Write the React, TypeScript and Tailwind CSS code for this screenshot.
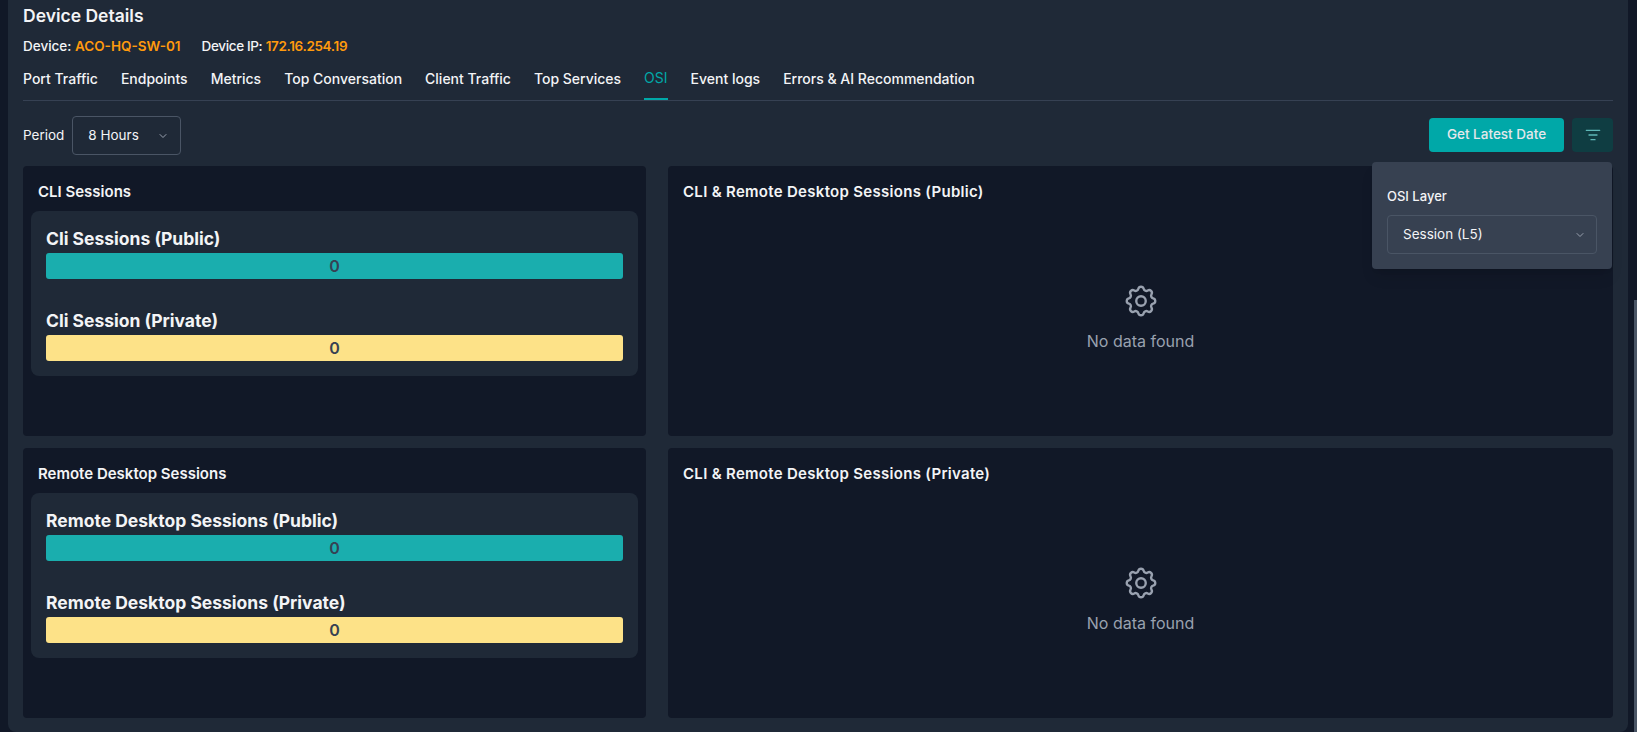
import { ChevronDown, ListFilter } from "lucide-react";
import { TbSettings } from "react-icons/tb";

const tabs = [
  "Port Traffic",
  "Endpoints",
  "Metrics",
  "Top Conversation",
  "Client Traffic",
  "Top Services",
  "OSI",
  "Event logs",
  "Errors & AI Recommendation",
];

const Bar = ({ label, color }: { label: string; color: string }) => (
  <div>
    <p className="text-[17.5px] leading-[28px] font-bold text-gray-100 mb-0">{label}</p>
    <div className={`h-[26px] rounded-[3px] flex items-center justify-center text-[16px] font-semibold text-gray-700 ${color}`}>0</div>
  </div>
);

const SessionCard = ({ title, rows }: { title: string; rows: string[] }) => (
  <section className="h-[270px] rounded bg-[#111827] pl-2 pr-2 pt-[16px]">
    <h3 className="pl-[7px] text-[15px] leading-[20px] font-semibold text-gray-100 mb-[9px]">{title}</h3>
    <div className="rounded-lg bg-[#1f2937] pl-[15px] pr-[15px] pt-[14px] pb-[15px] flex flex-col gap-[28px]">
      <Bar label={rows[0]} color="bg-[#1aaeae]" />
      <Bar label={rows[1]} color="bg-[#fde288]" />
    </div>
  </section>
);

const EmptyCard = ({ title }: { title: string }) => (
  <section className="h-[270px] rounded bg-[#111827] px-[15px] pt-[16px] flex flex-col">
    <h3 className="text-[15px] leading-[20px] tracking-[0.3px] font-semibold text-gray-100">{title}</h3>
    <div className="flex flex-col items-center mt-[80px]">
      <TbSettings size={38} strokeWidth={1.5} className="text-gray-400" />
      <p className="mt-[9px] text-base text-gray-400">No data found</p>
    </div>
  </section>
);

export default function App() {
  return (
    <div className="relative h-[732px] overflow-hidden bg-[#111827] font-['Inter','Liberation_Sans',sans-serif] pl-2 pr-[9px]">
      <main className="relative h-full rounded-b-lg bg-[#1f2937] px-[15px] text-gray-100">
        <h1 className="pt-[5px] text-[17.5px] leading-[22px] font-semibold">Device Details</h1>
        <div className="mt-[10px] flex gap-[21px] text-[13.5px] leading-[18px] font-medium">
          <span>
            Device: <b className="font-semibold text-[#ff9a0d]">ACO-HQ-SW-01</b>
          </span>
          <span className="tracking-[-0.35px]">
            Device IP: <b className="font-semibold text-[#ff9a0d]">172.16.254.19</b>
          </span>
        </div>
        <nav className="mt-[12px] flex gap-[23px] border-b border-gray-700 text-[14px]">
          {tabs.map((tab) => (
            <span
              key={tab}
              className={
                tab === "OSI"
                  ? "h-[33px] pt-[1px] leading-[20px] text-[#00a8a8] border-b-2 border-[#00a8a8] -mb-px"
                  : "h-[33px] pt-[2px] leading-[20px] font-medium"
              }
            >
              {tab}
            </span>
          ))}
        </nav>
        <div className="mt-[15px] h-[39px] flex items-center">
          <span className="text-[13.5px] mr-2">Period</span>
          <div className="w-[109px] h-[39px] rounded border border-gray-600 flex items-center justify-between pl-[15px] pr-[11px] text-[13.5px]">
            8 Hours
            <ChevronDown size={12} className="text-gray-400" />
          </div>
          <button className="ml-auto mb-[2px] h-[34px] w-[135px] rounded bg-[#00a8a8] text-[13.5px] font-medium text-gray-200">Get Latest Date</button>
          <button className="ml-2 mb-[2px] h-[34px] w-[41px] rounded bg-[#0f3d42] flex items-center justify-center">
            <ListFilter size={16} className="text-[#5eb8b8]" />
          </button>
        </div>
        <div className="mt-[11px] grid grid-cols-[623px_945px] gap-x-[22px] gap-y-3">
          <SessionCard title="CLI Sessions" rows={["Cli Sessions (Public)", "Cli Session (Private)"]} />
          <EmptyCard title="CLI & Remote Desktop Sessions (Public)" />
          <SessionCard title="Remote Desktop Sessions" rows={["Remote Desktop Sessions (Public)", "Remote Desktop Sessions (Private)"]} />
          <EmptyCard title="CLI & Remote Desktop Sessions (Private)" />
        </div>
        {/* filter popover */}
        <div className="absolute left-[1364px] top-[162px] w-[240px] h-[107px] rounded bg-[#374151] px-[15px] pt-[24px] shadow-lg">
          <p className="text-[13px] leading-[20px] font-medium">OSI Layer</p>
          <div className="mt-[9px] h-[39px] rounded border border-gray-600 flex items-center justify-between pl-[15px] pr-[10px] text-[13.5px]">
            Session (L5)
            <ChevronDown size={12} className="text-gray-400" />
          </div>
        </div>
      </main>
      <div className="absolute right-0 top-[300px] bottom-0 w-[3px] bg-gray-600" />
    </div>
  );
}
